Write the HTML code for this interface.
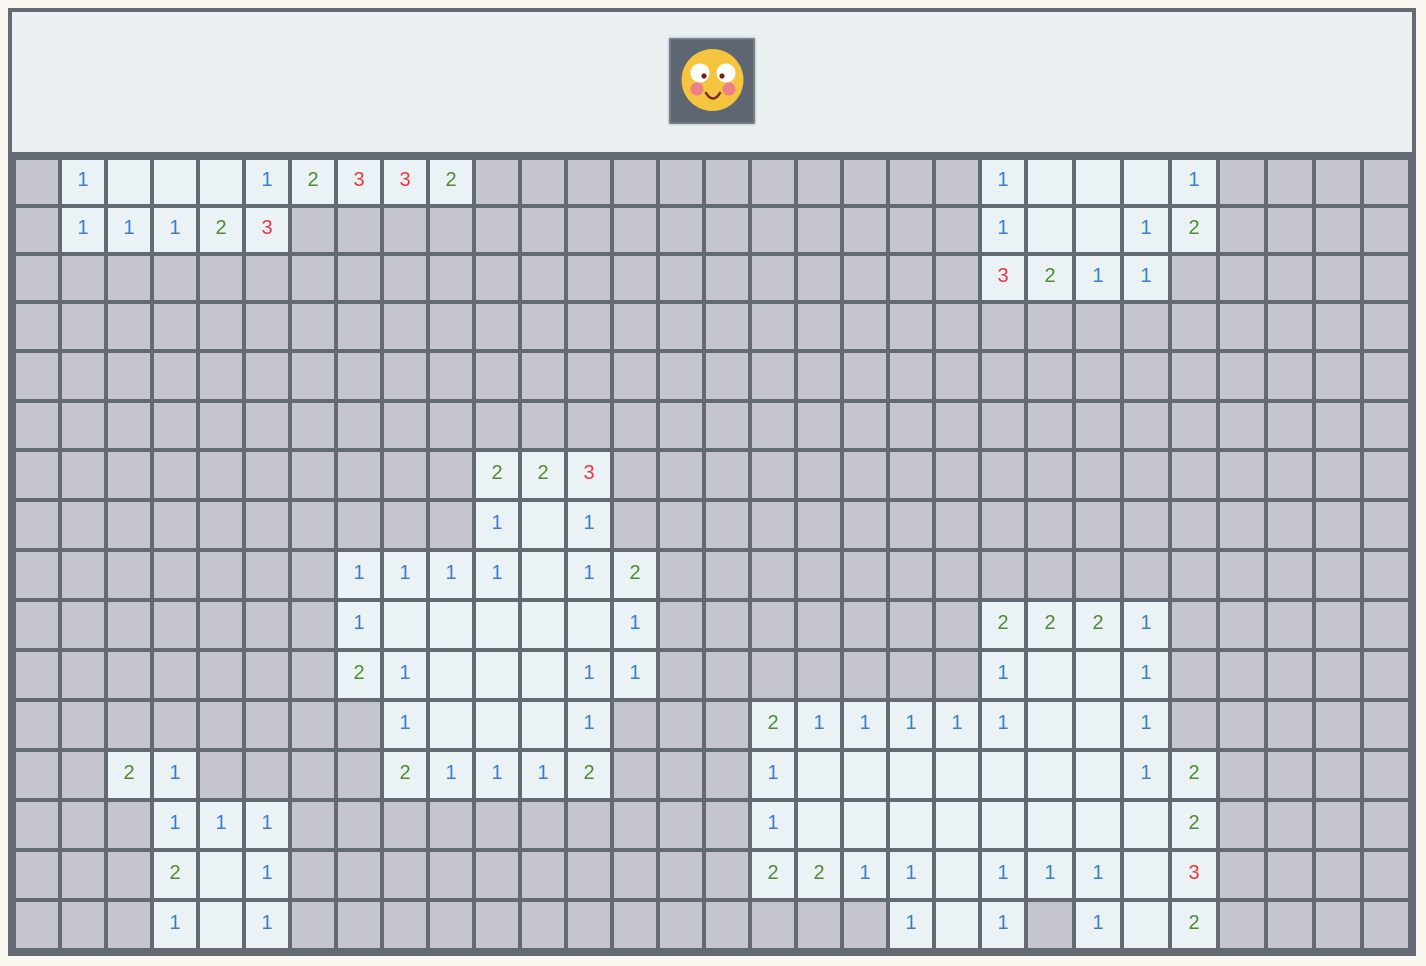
<!DOCTYPE html>
<html><head><meta charset="utf-8"><style>
html,body{margin:0;padding:0}
body{width:1426px;height:966px;background:#fbf8f2;position:relative;overflow:hidden;font-family:"Liberation Sans",sans-serif}
#frame{position:absolute;left:8px;top:8px;width:1408px;height:948px;background:#636a73}
#head{position:absolute;left:4px;top:4px;width:1400px;height:140px;background:#ebf0f2}
#btn{position:absolute;left:657px;top:26px;width:86px;height:86px;background:#5e6672;box-shadow:0 0 2px 1px #8a9098 inset, 0 0 3px #aab}
#grid{position:absolute;left:8px;top:152px;width:1392px;height:788px;display:grid;
grid-template-columns:repeat(22,42px) repeat(8,44px);
grid-template-rows:44px 44px 44px 45px 46px 45px repeat(10,46px);gap:4px}
#grid>*{display:flex;align-items:center;justify-content:center;font-size:20px;text-decoration:none;font-style:normal;font-weight:normal;padding-bottom:3px;box-sizing:border-box}
i{background:#c5c5d0}
s,b,u,em{background:#ebf2f5}
b{color:#3a7cc8}u{color:#4d8a2c}em{color:#ee3340}
</style></head><body>
<div id="frame">
<div id="head"><div id="btn"><svg width="86" height="86" viewBox="0 0 86 86">
<circle cx="43.5" cy="42" r="31" fill="#f5c540"/>
<circle cx="31" cy="35" r="9.5" fill="#fff"/><circle cx="57" cy="35" r="9.5" fill="#fff"/>
<circle cx="35" cy="38" r="2.6" fill="#7a1d14"/><circle cx="53" cy="38" r="2.6" fill="#7a1d14"/>
<circle cx="28" cy="51" r="6.5" fill="#ec7f8a"/><circle cx="60" cy="51" r="6.5" fill="#ec7f8a"/>
<path d="M37 55 Q44 66 51 55" fill="none" stroke="#7a2a10" stroke-width="2.5" stroke-linecap="round"/>
</svg></div></div>
<div id="grid">
<i></i><b>1</b><s></s><s></s><s></s><b>1</b><u>2</u><em>3</em><em>3</em><u>2</u><i></i><i></i><i></i><i></i><i></i><i></i><i></i><i></i><i></i><i></i><i></i><b>1</b><s></s><s></s><s></s><b>1</b><i></i><i></i><i></i><i></i>
<i></i><b>1</b><b>1</b><b>1</b><u>2</u><em>3</em><i></i><i></i><i></i><i></i><i></i><i></i><i></i><i></i><i></i><i></i><i></i><i></i><i></i><i></i><i></i><b>1</b><s></s><s></s><b>1</b><u>2</u><i></i><i></i><i></i><i></i>
<i></i><i></i><i></i><i></i><i></i><i></i><i></i><i></i><i></i><i></i><i></i><i></i><i></i><i></i><i></i><i></i><i></i><i></i><i></i><i></i><i></i><em>3</em><u>2</u><b>1</b><b>1</b><i></i><i></i><i></i><i></i><i></i>
<i></i><i></i><i></i><i></i><i></i><i></i><i></i><i></i><i></i><i></i><i></i><i></i><i></i><i></i><i></i><i></i><i></i><i></i><i></i><i></i><i></i><i></i><i></i><i></i><i></i><i></i><i></i><i></i><i></i><i></i>
<i></i><i></i><i></i><i></i><i></i><i></i><i></i><i></i><i></i><i></i><i></i><i></i><i></i><i></i><i></i><i></i><i></i><i></i><i></i><i></i><i></i><i></i><i></i><i></i><i></i><i></i><i></i><i></i><i></i><i></i>
<i></i><i></i><i></i><i></i><i></i><i></i><i></i><i></i><i></i><i></i><i></i><i></i><i></i><i></i><i></i><i></i><i></i><i></i><i></i><i></i><i></i><i></i><i></i><i></i><i></i><i></i><i></i><i></i><i></i><i></i>
<i></i><i></i><i></i><i></i><i></i><i></i><i></i><i></i><i></i><i></i><u>2</u><u>2</u><em>3</em><i></i><i></i><i></i><i></i><i></i><i></i><i></i><i></i><i></i><i></i><i></i><i></i><i></i><i></i><i></i><i></i><i></i>
<i></i><i></i><i></i><i></i><i></i><i></i><i></i><i></i><i></i><i></i><b>1</b><s></s><b>1</b><i></i><i></i><i></i><i></i><i></i><i></i><i></i><i></i><i></i><i></i><i></i><i></i><i></i><i></i><i></i><i></i><i></i>
<i></i><i></i><i></i><i></i><i></i><i></i><i></i><b>1</b><b>1</b><b>1</b><b>1</b><s></s><b>1</b><u>2</u><i></i><i></i><i></i><i></i><i></i><i></i><i></i><i></i><i></i><i></i><i></i><i></i><i></i><i></i><i></i><i></i>
<i></i><i></i><i></i><i></i><i></i><i></i><i></i><b>1</b><s></s><s></s><s></s><s></s><s></s><b>1</b><i></i><i></i><i></i><i></i><i></i><i></i><i></i><u>2</u><u>2</u><u>2</u><b>1</b><i></i><i></i><i></i><i></i><i></i>
<i></i><i></i><i></i><i></i><i></i><i></i><i></i><u>2</u><b>1</b><s></s><s></s><s></s><b>1</b><b>1</b><i></i><i></i><i></i><i></i><i></i><i></i><i></i><b>1</b><s></s><s></s><b>1</b><i></i><i></i><i></i><i></i><i></i>
<i></i><i></i><i></i><i></i><i></i><i></i><i></i><i></i><b>1</b><s></s><s></s><s></s><b>1</b><i></i><i></i><i></i><u>2</u><b>1</b><b>1</b><b>1</b><b>1</b><b>1</b><s></s><s></s><b>1</b><i></i><i></i><i></i><i></i><i></i>
<i></i><i></i><u>2</u><b>1</b><i></i><i></i><i></i><i></i><u>2</u><b>1</b><b>1</b><b>1</b><u>2</u><i></i><i></i><i></i><b>1</b><s></s><s></s><s></s><s></s><s></s><s></s><s></s><b>1</b><u>2</u><i></i><i></i><i></i><i></i>
<i></i><i></i><i></i><b>1</b><b>1</b><b>1</b><i></i><i></i><i></i><i></i><i></i><i></i><i></i><i></i><i></i><i></i><b>1</b><s></s><s></s><s></s><s></s><s></s><s></s><s></s><s></s><u>2</u><i></i><i></i><i></i><i></i>
<i></i><i></i><i></i><u>2</u><s></s><b>1</b><i></i><i></i><i></i><i></i><i></i><i></i><i></i><i></i><i></i><i></i><u>2</u><u>2</u><b>1</b><b>1</b><s></s><b>1</b><b>1</b><b>1</b><s></s><em>3</em><i></i><i></i><i></i><i></i>
<i></i><i></i><i></i><b>1</b><s></s><b>1</b><i></i><i></i><i></i><i></i><i></i><i></i><i></i><i></i><i></i><i></i><i></i><i></i><i></i><b>1</b><s></s><b>1</b><i></i><b>1</b><s></s><u>2</u><i></i><i></i><i></i><i></i>
</div>
</div>
</body></html>
